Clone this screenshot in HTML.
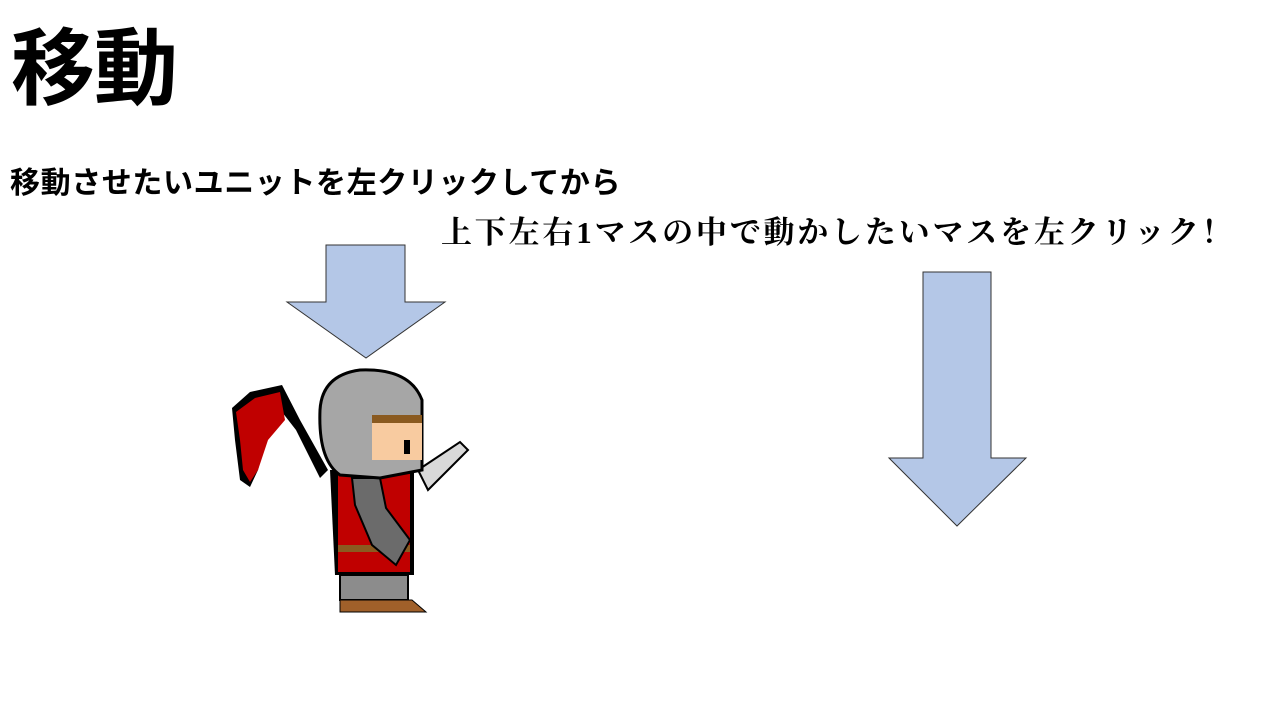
<!DOCTYPE html>
<html><head><meta charset="utf-8"><style>
body{margin:0;width:1280px;height:720px;background:#fff;position:relative;overflow:hidden}
.t{position:absolute;white-space:nowrap;color:#000}
</style></head><body>
<div class="t" style="left:11px;top:27px;font:bold 84px/1 'Liberation Sans','Noto Sans CJK JP',sans-serif;letter-spacing:-1px">移動</div>
<div class="t" style="left:10px;top:169px;font:bold 30px/1 'Liberation Sans','Noto Sans CJK JP',sans-serif;letter-spacing:0.6px">移動させたいユニットを左クリックしてから</div>
<div class="t" style="left:441px;top:217px;font:bold 31px/1 'Liberation Serif','Noto Serif CJK SC',serif;letter-spacing:2.8px">上下左右1マスの中で動かしたいマスを左クリック！</div>
<svg width="1280" height="720" style="position:absolute;left:0;top:0">
<polygon points="326,245 405,245 405,302 445,302 366,358 287,302 326,302" fill="#b4c7e7" stroke="#333" stroke-width="1"/>
<polygon points="923,272 991,272 991,458 1026,458 957,526 889,458 923,458" fill="#b4c7e7" stroke="#333" stroke-width="1"/>
<path d="M232,408 L250,392 L282,385 L300,420 L328,470 L320,478 L296,430 L282,412 L268,430 L258,470 L250,487 L240,480 L235,440 Z" fill="#000"/>
<path d="M236,412 L255,398 L280,392 L285,420 L268,440 L258,470 L250,482 L243,470 L240,440 Z" fill="#c00000"/>
<path d="M330,470 L414,470 L414,575 L335,575 Z" fill="#000"/>
<rect x="338" y="474" width="72" height="98" fill="#c00000"/>
<rect x="338" y="545" width="72" height="7" fill="#8a5a20"/>
<path d="M352,478 L380,478 L386,508 L410,540 L396,565 L372,545 L355,505 Z" fill="#6b6b6b" stroke="#000" stroke-width="2"/>
<path d="M418,470 L460,442 L468,450 L428,490 Z" fill="#d9d9d9" stroke="#000" stroke-width="2"/>
<path d="M320,410 Q322,375 360,370 Q410,368 422,400 L422,470 L380,478 L340,475 Q318,460 320,410 Z" fill="#a6a6a6" stroke="#000" stroke-width="3"/>
<rect x="372" y="415" width="50" height="45" fill="#f8cba0"/>
<rect x="372" y="415" width="50" height="8" fill="#8a5a20"/>
<rect x="404" y="440" width="6" height="14" fill="#000"/>
<rect x="340" y="575" width="68" height="25" fill="#8c8c8c" stroke="#000" stroke-width="2"/>
<path d="M340,600 L412,600 L426,612 L340,612 Z" fill="#a0602a" stroke="#000" stroke-width="1"/>
</svg>
</body></html>
